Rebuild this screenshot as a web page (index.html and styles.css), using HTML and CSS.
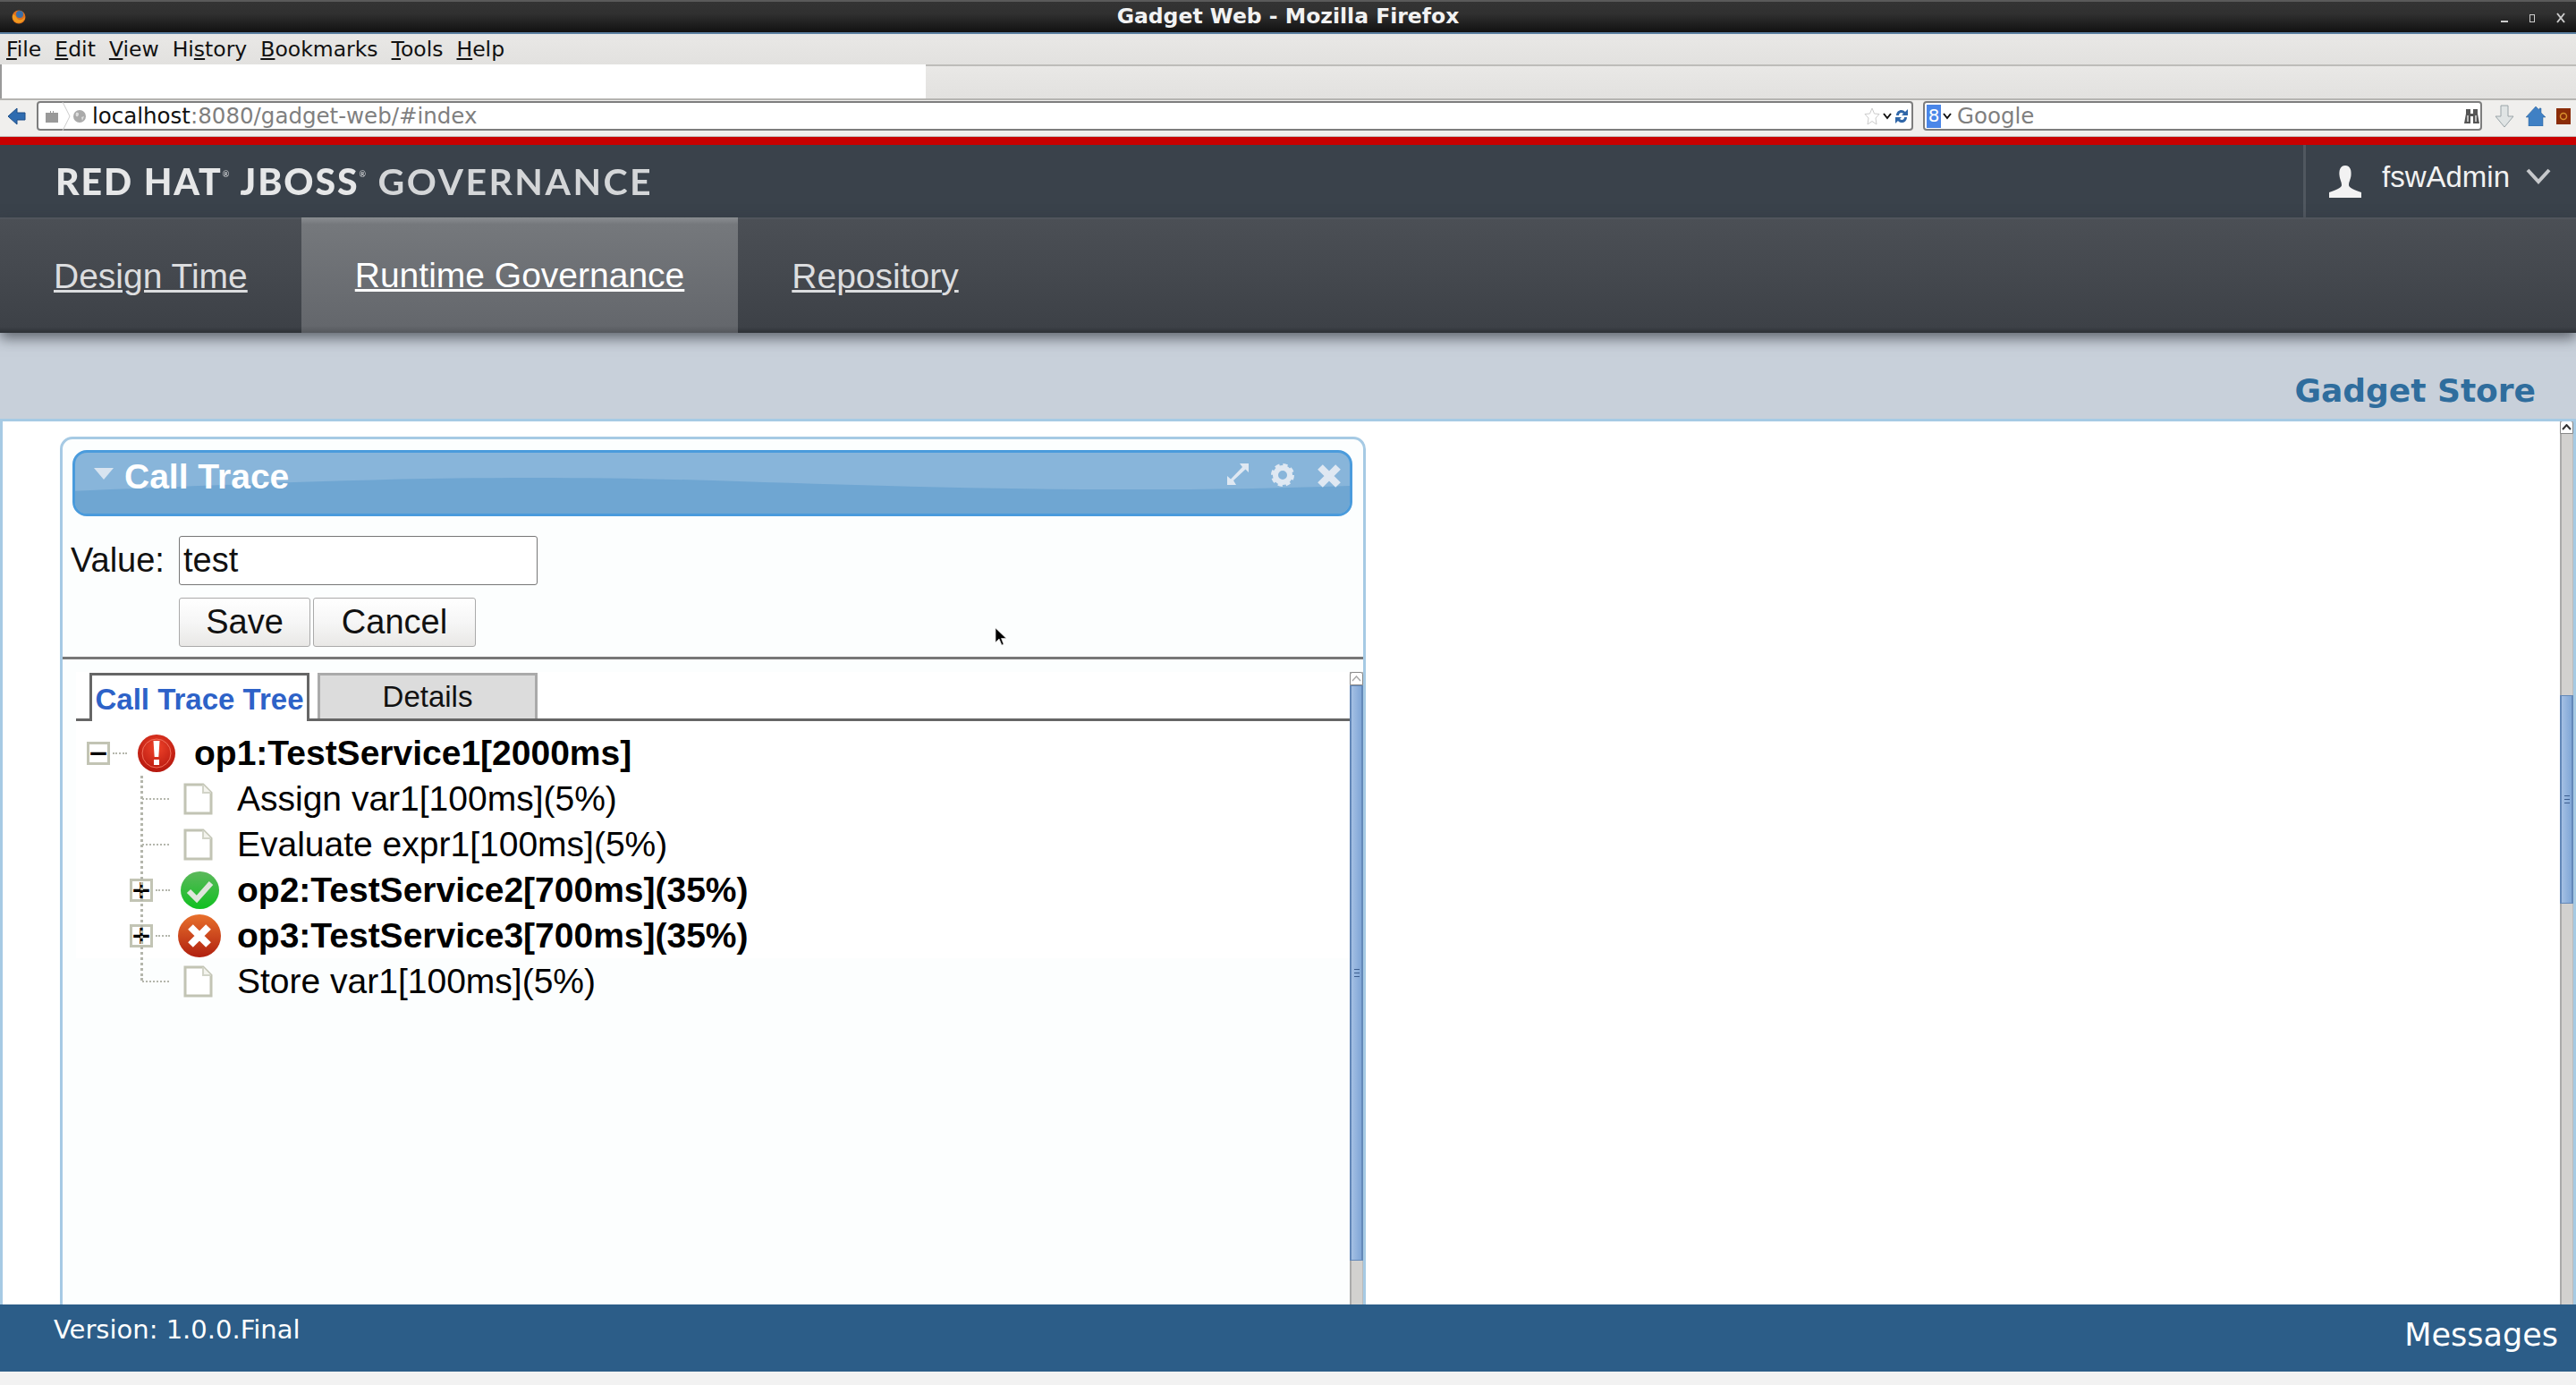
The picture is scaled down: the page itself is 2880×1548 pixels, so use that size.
FILE: index.html
```html
<!DOCTYPE html>
<html lang="en">
<head>
    <meta charset="UTF-8">
    <title>Gadget Web - Mozilla Firefox</title>
    <link rel="stylesheet" href="styles.css">
</head>
<body>
    <svg class="defs" width="0" height="0">
        <defs>
            <radialGradient id="red-ball" cx="50%" cy="35%" r="70%">
                <stop offset="0" stop-color="#f0432a"/>
                <stop offset="1" stop-color="#b0140c"/>
            </radialGradient>
            <linearGradient id="green-ball" x1="0" y1="0" x2="0" y2="1">
                <stop offset="0" stop-color="#5cb85c"/>
                <stop offset="1" stop-color="#10c020"/>
            </linearGradient>
            <linearGradient id="orange-ball" x1="0" y1="0" x2="0" y2="1">
                <stop offset="0" stop-color="#e8702c"/>
                <stop offset="1" stop-color="#b0200f"/>
            </linearGradient>
            <symbol id="i-doc" viewBox="0 0 33 36">
                <path d="M2 2H22L31 11V34H2Z" fill="#fff" stroke="#c2c4b4" stroke-width="3"/>
                <path d="M22 2V11H31" fill="#f4f4ee" stroke="#d2d4c8" stroke-width="2"/>
            </symbol>
            <symbol id="i-alert" viewBox="0 0 44 42">
                <ellipse cx="22" cy="21" rx="21" ry="21" fill="url(#red-ball)"/>
                <circle cx="22" cy="21" r="16" fill="none" stroke="#f2705c" stroke-width="1"/>
                <path d="M18.5 7H25.5L24.3 25H19.7Z M19 28H25V34H19Z" fill="#fff"/>
            </symbol>
            <symbol id="i-check" viewBox="0 0 43 42">
                <ellipse cx="21.5" cy="21" rx="21.5" ry="21" fill="url(#green-ball)"/>
                <path d="M9 22L18 31L34 13" fill="none" stroke="#dfe6dc" stroke-width="6"/>
            </symbol>
            <symbol id="i-error" viewBox="0 0 48 48">
                <circle cx="24" cy="24" r="24" fill="url(#orange-ball)"/>
                <path d="M14 14L34 34M34 14L14 34" fill="none" stroke="#fff" stroke-width="8"/>
            </symbol>
        </defs>
    </svg>

    <div class="titlebar">
        <svg class="fox" width="16" height="22" viewBox="0 0 16 22">
            <circle cx="8" cy="11" r="7.5" fill="#e0701c"/>
            <circle cx="9" cy="8" r="4" fill="#3a6ea8"/>
            <path d="M1 9C4 6 5 13 8 14C11 15 13 13 15 11C14 18 4 21 1 12Z" fill="#f09a20"/>
        </svg>
        <span class="window-title">Gadget Web - Mozilla Firefox</span>
        <div class="window-btns">
            <span class="win-min"></span>
            <span class="win-max"></span>
            <svg class="win-close" width="10" height="12" viewBox="0 0 10 12"><path d="M1 1L9 11M9 1L1 11" stroke="#ccc" stroke-width="2"/></svg>
        </div>
    </div>

    <div class="menubar">
        <span><u>F</u>ile</span>
        <span><u>E</u>dit</span>
        <span><u>V</u>iew</span>
        <span>Hi<u>s</u>tory</span>
        <span><u>B</u>ookmarks</span>
        <span><u>T</u>ools</span>
        <span><u>H</u>elp</span>
    </div>

    <div class="tabstrip"><div class="browser-tab"></div></div>

    <div class="navbar">
        <svg class="back" width="20" height="20" viewBox="0 0 20 20"><path d="M0 10L10 1V6H19V14H10V19Z" fill="#2f6cb0" stroke="#1f4f88"/></svg>
        <div class="urlbar">
            <svg class="identity" width="14" height="14" viewBox="0 0 14 14"><path d="M0 3H5V1H6V3H8V1H9V3H14V14H0Z" fill="#999"/></svg>
            <svg class="chevron-sep" width="10" height="32" viewBox="0 0 10 32"><path d="M1 0L9 16L1 32" fill="none" stroke="#ccc"/></svg>
            <svg class="globe" width="14" height="14" viewBox="0 0 14 14"><circle cx="7" cy="7" r="7" fill="#aaa"/><path d="M3 3C6 2 7 5 5 7C3 8 2 6 3 3ZM9 8L12 7L10 12Z" fill="#ddd"/></svg>
            <span class="url-host">localhost</span><span class="url-rest">:8080/gadget-web/#index</span>
            <span class="url-end">
                <svg width="18" height="20" viewBox="0 0 18 20"><path d="M9 1L11.5 7L17 7.5L13 12L14 19L9 15.5L4 19L5 12L1 7.5L6.500 7Z" fill="#fff" stroke="#ccc"/></svg>
                <svg width="10" height="8" viewBox="0 0 10 8"><path d="M1 1L5 6L9 1" fill="none" stroke="#111" stroke-width="2"/></svg>
                <svg width="16" height="20" viewBox="0 0 16 20"><path d="M2 9C2 3 9 1 12 5L15 2V9H8L10 7C8 5 5 6 5 9ZM14 11C14 17 7 19 4 15L1 18V11H8L6 13C8 15 11 14 11 11Z" fill="#2f66a8"/></svg>
            </span>
        </div>
        <div class="searchbar">
            <span class="engine">8</span>
            <svg width="10" height="8" viewBox="0 0 10 8"><path d="M1 1L5 6L9 1" fill="none" stroke="#111" stroke-width="2"/></svg>
            <span class="search-text">Google</span>
            <svg class="binoculars" width="17" height="18" viewBox="0 0 17 18"><path d="M2 1H7V6H10V1H15V6L17 17H10V9H7V17H0L2 6Z" fill="#555"/><path d="M3 8H5V15H3ZM12 8H14V15H12Z" fill="#bbb"/></svg>
        </div>
        <svg class="tool-down" width="22" height="26" viewBox="0 0 22 26"><path d="M7 1H15V13H21L11 25L1 13H7Z" fill="#e0e4e4" stroke="#9aa4a8"/></svg>
        <svg class="tool-home" width="22" height="22" viewBox="0 0 22 22"><path d="M11 0L15 4V2H17V7L22 12H19V22H3V12H0Z" fill="#3f80c4" stroke="#2a5c94" stroke-width=".5"/></svg>
        <svg class="tool-addon" width="16" height="18" viewBox="0 0 16 18"><rect width="16" height="18" fill="#8a2c08"/><circle cx="8" cy="9" r="3.500" fill="none" stroke="#d8902c" stroke-width="1.500"/></svg>
    </div>

    <div class="redbar"></div>

    <header class="brandbar">
        <div class="logo">RED HAT<i>®</i> JBOSS<i>®</i> <span>GOVERNANCE</span></div>
        <div class="usermenu">
            <svg width="36" height="36" viewBox="0 0 36 36"><path d="M18 0C24 0 25 6 24.500 11C24 16 22 18 22 22C22 25 28 27 36 30V36H0V30C8 27 14 25 14 22C14 18 12 16 11.500 11C11 6 12 0 18 0Z" fill="#f2f2f2"/></svg>
            <span class="username">fswAdmin</span>
            <svg class="user-chevron" width="28" height="18" viewBox="0 0 28 18"><path d="M2 2L14 15L26 2" fill="none" stroke="#c6c8cb" stroke-width="4"/></svg>
        </div>
    </header>

    <nav class="mainnav">
        <a class="navtab" href="#">Design Time</a>
        <a class="navtab active" href="#">Runtime Governance</a>
        <a class="navtab" href="#">Repository</a>
    </nav>

    <div class="storebar"><a href="#">Gadget Store</a></div>

    <main class="portal">
        <div class="portal-content">
            <section class="gadget">
                <div class="gadget-title">
                    <svg class="gadget-wave" viewBox="0 0 1000 70" preserveAspectRatio="none"><path d="M0 44C200 32 320 24 500 32C700 42 850 46 1000 38V70H0Z" fill="#6fa6d2"/></svg>
                    <span class="collapse-arrow"></span>
                    <span class="gadget-name">Call Trace</span>
                    <div class="gadget-actions">
                        <svg width="24" height="24" viewBox="0 0 24 24"><path d="M14 0H24V10L20.500 6.500L7 19L10 24H0V14L4 17.500L17 4Z" fill="#dfe8f2"/></svg>
                        <svg width="26" height="26" viewBox="0 0 26 26"><circle cx="13" cy="13" r="8" fill="none" stroke="#dfe8f2" stroke-width="6"/><circle cx="13" cy="13" r="11" fill="none" stroke="#dfe8f2" stroke-width="4" stroke-dasharray="5 3.640"/></svg>
                        <svg width="28" height="28" viewBox="0 0 28 28"><path d="M4 4L24 24M24 4L4 24" stroke="#dfe8f2" stroke-width="8"/></svg>
                    </div>
                </div>

                <form class="value-form">
                    <label for="value">Value:</label>
                    <input type="text" id="value" value="test">
                    <div class="form-buttons">
                        <button type="button" class="btn-save">Save</button>
                        <button type="button" class="btn-cancel">Cancel</button>
                    </div>
                </form>

                <div class="gadget-body">
                    <div class="tabs-pane">
                        <div class="tabbar">
                            <div class="tab active">Call Trace Tree</div>
                            <div class="tab">Details</div>
                        </div>
                        <div class="tree">
                            <div class="tree-row root">
                                <span class="toggle">&minus;</span>
                                <span class="stub"></span>
                                <svg class="icon-alert" width="44" height="42"><use href="#i-alert"/></svg>
                                <strong>op1:TestService1[2000ms]</strong>
                            </div>
                            <div class="tree-children">
                                <div class="tree-row leaf">
                                    <span class="branch"></span>
                                    <svg class="icon-doc" width="33" height="36"><use href="#i-doc"/></svg>
                                    <span>Assign var1[100ms](5%)</span>
                                </div>
                                <div class="tree-row leaf">
                                    <span class="branch"></span>
                                    <svg class="icon-doc" width="33" height="36"><use href="#i-doc"/></svg>
                                    <span>Evaluate expr1[100ms](5%)</span>
                                </div>
                                <div class="tree-row node">
                                    <span class="toggle">+</span>
                                    <span class="stub"></span>
                                    <svg class="icon-check" width="43" height="42"><use href="#i-check"/></svg>
                                    <strong>op2:TestService2[700ms](35%)</strong>
                                </div>
                                <div class="tree-row node">
                                    <span class="toggle">+</span>
                                    <span class="stub"></span>
                                    <svg class="icon-error" width="48" height="48"><use href="#i-error"/></svg>
                                    <strong>op3:TestService3[700ms](35%)</strong>
                                </div>
                                <div class="tree-row leaf">
                                    <span class="branch"></span>
                                    <svg class="icon-doc" width="33" height="36"><use href="#i-doc"/></svg>
                                    <span>Store var1[100ms](5%)</span>
                                </div>
                            </div>
                        </div>
                    </div>
                    <div class="scroll inner-scroll">
                        <div class="scroll-up"><svg width="11" height="7" viewBox="0 0 11 7"><path d="M1 6L5.500 1L10 6" fill="none" stroke="#aaa" stroke-width="1.500"/></svg></div>
                        <div class="scroll-thumb"><span></span></div>
                    </div>
                </div>
            </section>
        </div>
        <div class="scroll page-scroll">
            <div class="scroll-up"><svg width="11" height="7" viewBox="0 0 11 7"><path d="M1 6L5.500 1L10 6" fill="none" stroke="#333" stroke-width="2"/></svg></div>
            <div class="scroll-thumb"><span></span></div>
        </div>
    </main>

    <footer class="footer">
        <span class="version">Version: 1.0.0.Final</span>
        <span class="messages">Messages</span>
    </footer>
    <div class="bottom-strip"></div>

    <svg class="mouse-cursor" width="14" height="22" viewBox="0 0 14 22"><path d="M1 1V17L5 13L8 20L10 19L7.500 12.500H13Z" fill="#000" stroke="#ddd" stroke-width=".7"/></svg>
</body>
</html>
```

FILE: styles.css
```css
html, body {
    height: 100%;
}
body {
    margin: 0;
    height: 100vh;
    overflow: hidden;
    display: flex;
    flex-direction: column;
    position: relative;
    background: #fff;
    font-family: "Liberation Sans", Arial, sans-serif;
    color: #111;
}
.defs {
    position: absolute;
}

/* window + browser chrome */
.titlebar {
    height: 38px;
    flex: none;
    box-sizing: border-box;
    display: flex;
    align-items: center;
    justify-content: center;
    position: relative;
    padding-bottom: 3px;
    border-top: 2px solid #5a5a5a;
    border-bottom: 2px solid #5b7fa0;
    background: linear-gradient(#343434, #303030 40%, #111);
}
.window-title {
    font-family: "DejaVu Sans", sans-serif;
    font-weight: bold;
    font-size: 23.5px;
    color: #f2f2f2;
}
.fox {
    position: absolute;
    left: 13px;
    top: 6px;
}
.window-btns {
    position: absolute;
    right: 12px;
    top: 8px;
    display: flex;
    align-items: center;
    gap: 24px;
    height: 20px;
}
.win-min {
    width: 8px;
    height: 2px;
    margin-top: 8px;
    background: #ccc;
}
.win-max {
    width: 4px;
    height: 7px;
    border: 1px solid #ccc;
}
.menubar {
    height: 36px;
    flex: none;
    box-sizing: border-box;
    display: flex;
    align-items: center;
    gap: 15px;
    padding: 0 0 0 7px;
    font-family: "DejaVu Sans", sans-serif;
    font-size: 23.5px;
    background: linear-gradient(#e9e8e6, #e2e1df);
    border-bottom: 2px solid #bdbcb9;
}
.tabstrip {
    height: 38px;
    flex: none;
    box-sizing: border-box;
    background: linear-gradient(#e9e8e6, #e2e1df);
    border-bottom: 2px solid #b5b4b1;
}
.browser-tab {
    width: 1035px;
    height: 38px;
    margin-top: -2px;
    box-sizing: border-box;
    background: #fff;
    border-left: 2px solid #999;
}
.navbar {
    height: 41px;
    flex: none;
    box-sizing: border-box;
    display: flex;
    align-items: center;
    padding: 0 5px 5px 9px;
    background: #f0efed;
    border-bottom: 1px solid #c4c3c0;
}
.urlbar, .searchbar {
    height: 33px;
    box-sizing: border-box;
    display: flex;
    align-items: center;
    background: #fff;
    border: 2px solid #7d7d7d;
    border-radius: 4px;
    font-family: "DejaVu Sans", sans-serif;
    font-size: 24.5px;
}
.urlbar {
    width: 2098px;
    margin-left: 12px;
    padding-left: 8px;
}
.chevron-sep {
    margin-left: 4px;
}
.globe {
    margin: 0 7px 0 3px;
}
.url-rest {
    color: #7f7f7f;
}
.url-end {
    margin-left: auto;
    display: flex;
    align-items: center;
    gap: 3px;
    padding-right: 3px;
}
.searchbar {
    width: 625px;
    margin-left: 11px;
    padding-left: 2px;
}
.engine {
    width: 16px;
    height: 26px;
    margin-right: 2px;
    background: #4a86e8;
    color: #fff;
    font-size: 20px;
    line-height: 25px;
    text-align: center;
}
.search-text {
    margin-left: 6px;
    color: #7f7f7f;
}
.binoculars {
    margin-left: auto;
    margin-right: 1px;
}
.tool-down {
    margin-left: 14px;
}
.tool-home {
    margin-left: 13px;
}
.tool-addon {
    margin-left: 12px;
}
.redbar {
    height: 9px;
    flex: none;
    background: #c90000;
}

/* application header */
.brandbar {
    height: 81px;
    flex: none;
    display: flex;
    justify-content: space-between;
    background: #3a424b;
}
.logo {
    align-self: center;
    margin-left: 62px;
    font-family: Lato, sans-serif;
    font-weight: 900;
    font-size: 41px;
    letter-spacing: 1.9px;
    color: #e6e7e8;
    filter: blur(.7px);
    white-space: nowrap;
}
.logo span {
    font-weight: 700;
    color: #d4d6d8;
    letter-spacing: 2.5px;
}
.logo i {
    font-style: normal;
    font-size: 9px;
    font-weight: 400;
    vertical-align: 20px;
}
.usermenu {
    width: 305px;
    box-sizing: border-box;
    display: flex;
    align-items: center;
    padding-left: 26px;
    border-left: 3px solid #50575f;
}
.usermenu > svg:first-child {
    margin-top: 0;
}
.username {
    margin: -10px 0 0 23px;
    font-size: 33px;
    color: #f2f2f2;
}
.user-chevron {
    margin: -12px 0 0 18px;
}
.mainnav {
    height: 129px;
    flex: none;
    box-sizing: border-box;
    display: flex;
    position: relative;
    background: linear-gradient(#4b4f55, #44484e 50%, #3d4147 95%, #2c3035);
    border-top: 2px solid #50555c;
    box-shadow: 0 6px 14px rgba(40, 44, 52, .65);
    z-index: 1;
}
.navtab {
    display: flex;
    align-items: center;
    padding: 0 60px;
    font-size: 39px;
    color: #dcdddf;
}
.navtab.active {
    margin-top: -2px;
    color: #fff;
    background: linear-gradient(#8a8d91, #75787c 6%, #64676c 94%, #55585d);
}
.storebar {
    height: 96px;
    flex: none;
    box-sizing: border-box;
    display: flex;
    justify-content: flex-end;
    align-items: flex-end;
    padding: 0 45px 11px 0;
    background: #c8d0da;
}
.storebar a {
    font-family: "DejaVu Sans", sans-serif;
    font-weight: bold;
    font-size: 36px;
    color: #2f6d9d;
    text-decoration: none;
}

/* portal area */
.portal {
    flex: 1;
    min-height: 0;
    display: flex;
    overflow: hidden;
    background: #fff;
    border: solid #a6cae4;
    border-width: 3px 3px 0;
}
.portal-content {
    flex: 1;
    padding: 17px 0 0 64px;
    overflow: hidden;
}
.gadget {
    width: 1460px;
    height: 1100px;
    box-sizing: border-box;
    background: #fcfefe;
    border: 3px solid #a6cae4;
    border-radius: 14px 14px 0 0;
}
.gadget-title {
    height: 74px;
    margin: 12px 12px 0 11px;
    box-sizing: border-box;
    display: flex;
    align-items: flex-start;
    position: relative;
    overflow: hidden;
    background: #88b5da;
    border: 3px solid #4a9bdc;
    border-radius: 16px;
}
.gadget-wave {
    position: absolute;
    left: 0;
    top: 0;
    width: 100%;
    height: 100%;
}
.collapse-arrow {
    position: relative;
    margin: 17px 0 0 21px;
    border: solid transparent;
    border-width: 13px 11px 0;
    border-top-color: #d8e4f0;
}
.gadget-name {
    position: relative;
    margin: 5px 0 0 12px;
    font-weight: bold;
    font-size: 39px;
    color: #fff;
}
.gadget-actions {
    position: relative;
    margin: 12px 9px 0 auto;
    display: flex;
    align-items: flex-start;
    gap: 25px;
}
.value-form {
    display: grid;
    grid-template-columns: 121px 401px;
    align-items: center;
    row-gap: 14px;
    padding: 22px 0 11px 9px;
    border-bottom: 3px solid #777;
    font-size: 38px;
}
.value-form input {
    width: 100%;
    height: 55px;
    box-sizing: border-box;
    padding: 0 4px;
    border: 1px solid #777;
    border-radius: 3px;
    font: inherit;
    color: #111;
    background: #fff;
}
.form-buttons {
    grid-column: 2;
    display: flex;
    gap: 3px;
}
.form-buttons button {
    height: 55px;
    box-sizing: border-box;
    padding: 0;
    border: 1px solid #aaa;
    border-radius: 3px;
    background: linear-gradient(#fff, #f6f6f6 50%, #e9e8e6);
    font: inherit;
    color: #111;
}
.btn-save {
    width: 147px;
}
.btn-cancel {
    width: 182px;
}
.gadget-body {
    display: flex;
    height: 320px;
    padding-top: 14px;
}
.tabs-pane {
    flex: 1;
    margin-left: 15px;
    background: #fff;
}
.tabbar {
    display: flex;
    gap: 9px;
    height: 55px;
    box-sizing: border-box;
    padding-left: 15px;
    padding-top: 1px;
    border-bottom: 3px solid #666;
    font-size: 33px;
}
.tab {
    width: 246px;
    height: 51px;
    box-sizing: border-box;
    display: flex;
    align-items: center;
    justify-content: center;
    background: #dcdcdc;
    border: 3px solid #aaa;
    border-bottom: 0;
}
.tab.active {
    height: 54px;
    width: 246px;
    padding-top: 3px;
    background: #fff;
    border-color: #666;
    font-weight: bold;
    color: #2d62c8;
    white-space: nowrap;
}

/* tree */
.tree {
    padding: 10px 0 0 12px;
    font-size: 39px;
    color: #000;
}
.tree-row {
    height: 51px;
    display: flex;
    align-items: center;
    white-space: nowrap;
}
.toggle {
    width: 26px;
    height: 26px;
    flex: none;
    box-sizing: border-box;
    display: flex;
    align-items: center;
    justify-content: center;
    border: 3px solid #c2c4b4;
    background: #fff;
    font: bold 28px/1 "DejaVu Sans", sans-serif;
}
.stub {
    width: 16px;
    margin: 0 0 0 3px;
    border-top: 2px dotted #b4b6ac;
}
.icon-alert {
    margin: 0 20px 0 11px;
}
.tree-children {
    position: relative;
    margin-left: 48px;
}
.tree-children::before {
    content: "";
    position: absolute;
    left: 12px;
    top: 0;
    bottom: 26px;
    border-left: 3px dotted #b4b6ac;
}
.branch {
    width: 30px;
    margin-left: 14px;
    border-top: 2px dotted #b4b6ac;
}
.icon-doc {
    margin: 0 27px 0 16px;
}
.icon-check {
    margin: 0 20px 0 12px;
}
.icon-error {
    margin: 0 18px 0 9px;
}

/* scrollbars */
.scroll {
    width: 15px;
    flex: none;
    box-sizing: border-box;
    background: #d2d1cf;
    border-left: 2px solid #aaa;
    border-right: 1px solid #bbb;
}
.scroll-up {
    height: 15px;
    display: flex;
    align-items: center;
    justify-content: center;
    margin: 0 -1px 0 -2px;
    box-sizing: border-box;
    background: #fff;
    border: 1px solid #888;
    border-radius: 3px 3px 0 0;
}
.scroll-thumb {
    display: flex;
    align-items: center;
    justify-content: center;
    box-sizing: border-box;
    margin: 0 -1px 0 -2px;
    background: linear-gradient(90deg, #a4c0e4, #80a6d6);
    border: solid #6388b8;
    border-width: 1px 2px;
}
.scroll-thumb span {
    width: 6px;
    height: 7px;
    border-top: 1px solid #3d5f90;
    border-bottom: 1px solid #3d5f90;
    background: linear-gradient(#3d5f90, #3d5f90) center / 100% 1px no-repeat;
}
.inner-scroll .scroll-thumb {
    height: 643px;
    padding-bottom: 0;
}
.inner-scroll {
    height: 720px;
}
.page-scroll .scroll-up {
    margin-top: -1px;
}
.page-scroll .scroll-thumb {
    height: 233px;
    margin-top: 292px;
}
.footer {
    height: 75px;
    flex: none;
    display: flex;
    justify-content: space-between;
    background: #2c5d88;
    color: #fff;
    font-family: "DejaVu Sans", sans-serif;
    position: relative;
}
.version {
    margin: 11px 0 0 60px;
    font-size: 29px;
}
.messages {
    margin: 14px 20px 0 0;
    font-size: 35px;
}
.bottom-strip {
    height: 15px;
    flex: none;
    background: #f2f2f2;
}
.mouse-cursor {
    position: absolute;
    left: 1112px;
    top: 701px;
}
```
